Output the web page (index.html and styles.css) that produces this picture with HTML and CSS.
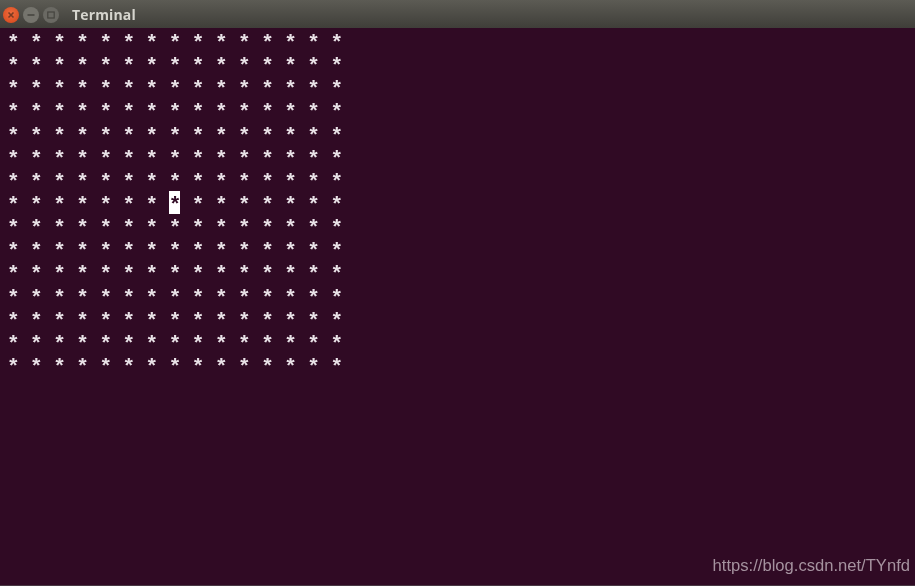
FILE: index.html
```html
<!DOCTYPE html>
<html lang="en">
<head>
<meta charset="utf-8">
<title>Terminal</title>
<link rel="stylesheet" href="styles.css">
</head>
<body>
<div class="window">
  <header class="titlebar">
    <div class="controls">
      <svg class="btn" viewBox="0 0 16 16"><defs><radialGradient id="c" cx=".5" cy=".4" r=".65"><stop offset="0" stop-color="#ee6c3e"/><stop offset="1" stop-color="#d94c20"/></radialGradient></defs><circle cx="8" cy="8" r="8" fill="url(#c)"/><path d="M5.5 5.5l5 5M10.5 5.5l-5 5" stroke="#7a3a22" stroke-width="1.6"/></svg>
      <svg class="btn" viewBox="0 0 16 16"><circle cx="8" cy="8" r="8" fill="#75746d"/><path d="M4.5 8h7" stroke="#3f3e39" stroke-width="1.4"/></svg>
      <svg class="btn" viewBox="0 0 16 16"><circle cx="8" cy="8" r="8" fill="#6a6963"/><rect x="4.8" y="5" width="6.4" height="6" fill="none" stroke="#45443f" stroke-width="1.2"/></svg>
    </div>
    <span class="title">Terminal</span>
  </header>
  <main class="screen">
<pre class="term">* * * * * * * * * * * * * * *
* * * * * * * * * * * * * * *
* * * * * * * * * * * * * * *
* * * * * * * * * * * * * * *
* * * * * * * * * * * * * * *
* * * * * * * * * * * * * * *
* * * * * * * * * * * * * * *
* * * * * * * <span class="cursor">*</span> * * * * * * *
* * * * * * * * * * * * * * *
* * * * * * * * * * * * * * *
* * * * * * * * * * * * * * *
* * * * * * * * * * * * * * *
* * * * * * * * * * * * * * *
* * * * * * * * * * * * * * *
* * * * * * * * * * * * * * *</pre>
    <span class="watermark">https://blog.csdn.net/TYnfd</span>
  </main>
</div>
</body>
</html>
```
FILE: styles.css
```css
html, body {
  margin: 0;
  height: 100%;
  overflow: hidden;
  background: #300a24;
}
.window {
  display: flex;
  flex-direction: column;
  height: 586px;
}
.titlebar {
  display: flex;
  align-items: center;
  flex: 0 0 28px;
  box-sizing: border-box;
  padding: 1px 0 0 3px;
  background: linear-gradient(#5c5b54, #3f3e39);
}
.controls {
  display: flex;
  gap: 4px;
}
.btn {
  display: block;
  width: 16px;
  height: 16px;
  filter: blur(.6px);
}
.title {
  margin-left: 13px;
  font: 700 14px/1 "Open Sans", sans-serif;
  letter-spacing: .15px;
  color: #d6d5ce;
  filter: blur(.4px);
}
.screen {
  position: relative;
  flex: 1;
  box-sizing: border-box;
  padding: 1px 0 0 7px;
  background: #300a24;
  border-bottom: 1px solid #483743;
}
.term {
  margin: 0;
  padding-top: 3px;
  font: 700 21px/23.14px "Liberation Mono", monospace;
  letter-spacing: -1.05px;
  color: #e8e1e6;
  filter: blur(.55px);
}
.cursor {
  display: inline-block;
  height: 23.14px;
  margin-top: -3px;
  padding-top: 3px;
  vertical-align: top;
  box-sizing: border-box;
  background: #fff;
  color: #300a24;
}
.watermark {
  position: absolute;
  right: 5px;
  bottom: 9px;
  font: 16.6px/20px "Liberation Sans", sans-serif;
  color: #a5929f;
  filter: blur(.4px);
}
```
